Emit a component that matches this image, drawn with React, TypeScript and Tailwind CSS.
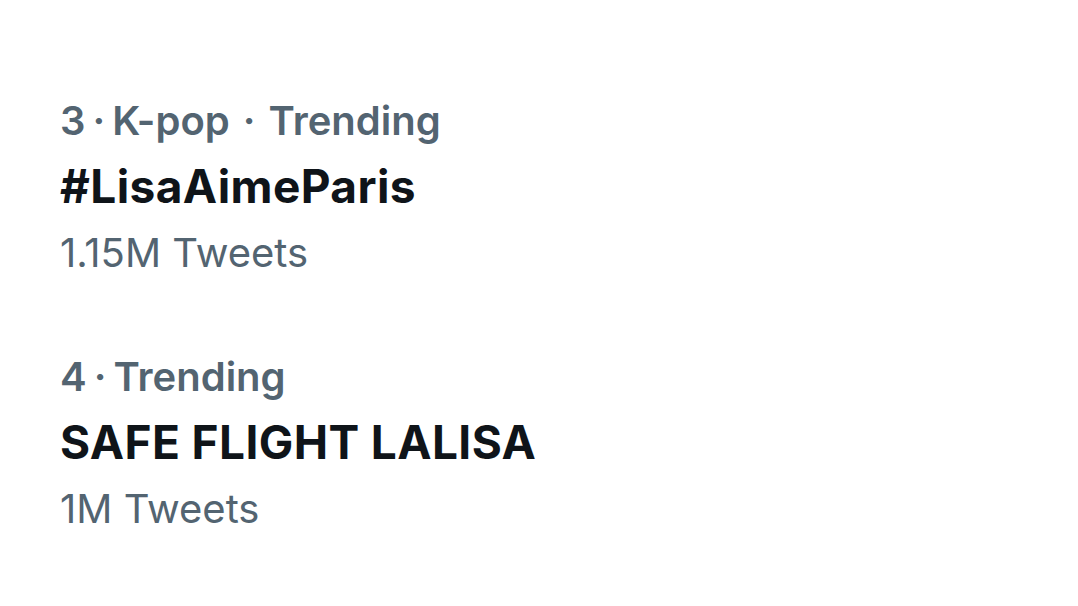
const trends = [
  { rank: 3, context: 'K-pop', name: '#LisaAimeParis', count: '1.15M Tweets' },
  { rank: 4, context: null, name: 'SAFE FLIGHT LALISA', count: '1M Tweets' },
]

function TrendItem({ rank, context, name, count }: { rank: number; context: string | null; name: string; count: string }) {
  return (
    <div className="flex flex-col">
      {/* meta line */}
      <div className="h-[60px] leading-[60px] text-[40px] font-semibold text-[#536471] whitespace-nowrap">
        {rank}
        <span className="mx-[7px]">·</span>
        {context && (
          <>
            {context}
            <span className="mx-[13px]">·</span>
          </>
        )}
        Trending
      </div>
      {/* trend name */}
      <div className="h-[71px] leading-[71px] text-[46px] tracking-[0.4px] font-bold text-[#0f1419] whitespace-nowrap">
        {name}
      </div>
      {/* tweet count */}
      <div className="h-[61px] leading-[61px] text-[40px] font-normal text-[#536471] whitespace-nowrap">
        {count}
      </div>
    </div>
  )
}

export default function App() {
  return (
    <div
      className="w-[1078px] h-[606px] bg-white flex flex-col gap-[64px] pl-[60px] pt-[91px]"
      style={{ fontFamily: 'Inter, "Noto Sans", sans-serif' }}
    >
      {trends.map((t) => (
        <TrendItem key={t.rank} {...t} />
      ))}
    </div>
  )
}
